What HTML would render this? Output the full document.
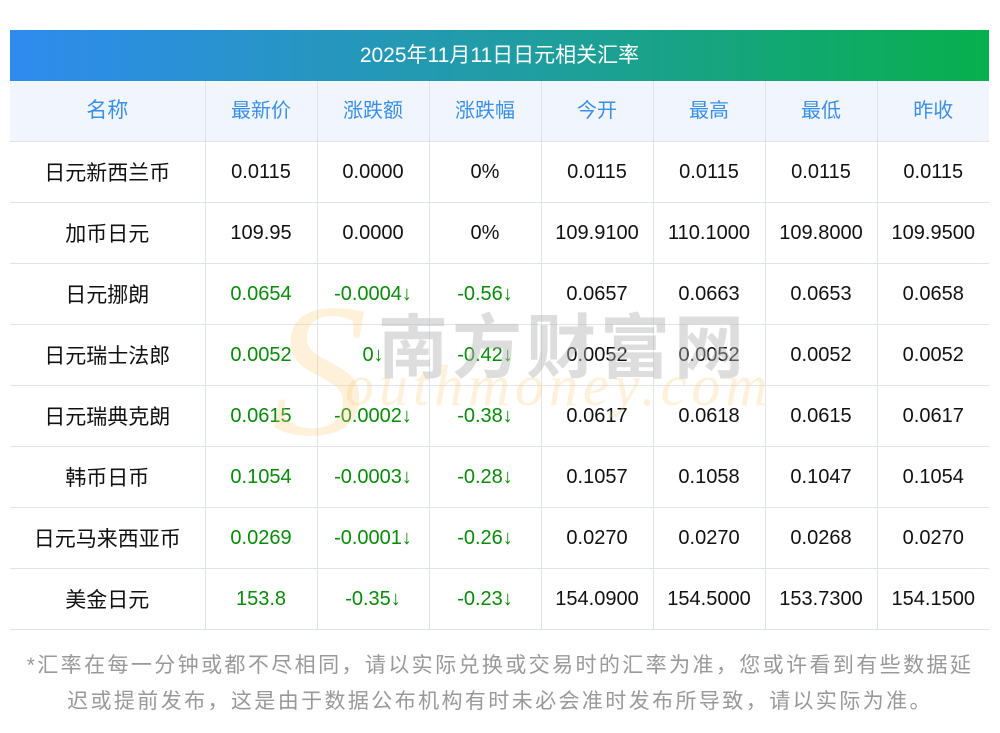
<!DOCTYPE html>
<html><head><meta charset="utf-8"><style>
body{margin:0;width:1000px;height:733px;background:#fff;font-family:"Liberation Sans","Noto Sans CJK SC",sans-serif;position:relative;overflow:hidden}
.title{position:absolute;left:10px;top:30px;width:979px;height:51px;background:linear-gradient(90deg,#2f8bef,#1f9e9e 55%,#07b04c);color:#fff;font-size:21px;line-height:51px;text-align:center}
table{position:absolute;left:10px;top:81px;border-collapse:collapse;width:979px;table-layout:fixed}
td{border:1px solid #dfe3ec;height:60px;text-align:center;font-size:20px;color:#111;padding:0;line-height:20px}
td span{position:relative;top:2px}
tr:first-child td span{top:0}
tr:first-child td{background:#f1f6fe;color:#3a8fe8}
td:first-child{border-left:none;font-size:21px}td:last-child{border-right:none}
tr:first-child td{border-top:none}
.g{color:#0a8a0a}
.note{position:absolute;left:-10px;top:648px;width:1020px;font-size:21px;color:#999;line-height:36px;text-align:center;letter-spacing:2.4px}
.wm1{position:absolute;left:378px;top:292px;font-size:70px;color:rgba(180,180,180,.45);letter-spacing:4px;font-family:"Noto Sans CJK SC",sans-serif;font-weight:bold;z-index:2}
.wm2{position:absolute;left:345px;top:352px;font-size:58px;color:rgba(252,200,120,.28);font-style:italic;font-family:"Liberation Serif",serif;letter-spacing:5px;z-index:2}
.wmS{position:absolute;left:272px;top:262px;font-size:190px;color:rgba(252,200,120,.28);font-style:italic;font-family:"Liberation Serif",serif;z-index:2}
</style></head><body>
<div class="title">2025年11月11日日元相关汇率</div>
<table>
<colgroup><col style="width:195px"><col style="width:112px"><col style="width:112px"><col style="width:112px"><col style="width:112px"><col style="width:112px"><col style="width:112px"><col style="width:112px"></colgroup>
<tr><td><span>名称</span></td><td><span>最新价</span></td><td><span>涨跌额</span></td><td><span>涨跌幅</span></td><td><span>今开</span></td><td><span>最高</span></td><td><span>最低</span></td><td><span>昨收</span></td></tr>
<tr><td><span>日元新西兰币</span></td><td>0.0115</td><td>0.0000</td><td>0%</td><td>0.0115</td><td>0.0115</td><td>0.0115</td><td>0.0115</td></tr>
<tr><td><span>加币日元</span></td><td>109.95</td><td>0.0000</td><td>0%</td><td>109.9100</td><td>110.1000</td><td>109.8000</td><td>109.9500</td></tr>
<tr><td><span>日元挪朗</span></td><td class="g">0.0654</td><td class="g">-0.0004↓</td><td class="g">-0.56↓</td><td>0.0657</td><td>0.0663</td><td>0.0653</td><td>0.0658</td></tr>
<tr><td><span>日元瑞士法郎</span></td><td class="g">0.0052</td><td class="g">0↓</td><td class="g">-0.42↓</td><td>0.0052</td><td>0.0052</td><td>0.0052</td><td>0.0052</td></tr>
<tr><td><span>日元瑞典克朗</span></td><td class="g">0.0615</td><td class="g">-0.0002↓</td><td class="g">-0.38↓</td><td>0.0617</td><td>0.0618</td><td>0.0615</td><td>0.0617</td></tr>
<tr><td><span>韩币日币</span></td><td class="g">0.1054</td><td class="g">-0.0003↓</td><td class="g">-0.28↓</td><td>0.1057</td><td>0.1058</td><td>0.1047</td><td>0.1054</td></tr>
<tr><td><span>日元马来西亚币</span></td><td class="g">0.0269</td><td class="g">-0.0001↓</td><td class="g">-0.26↓</td><td>0.0270</td><td>0.0270</td><td>0.0268</td><td>0.0270</td></tr>
<tr><td><span>美金日元</span></td><td class="g">153.8</td><td class="g">-0.35↓</td><td class="g">-0.23↓</td><td>154.0900</td><td>154.5000</td><td>153.7300</td><td>154.1500</td></tr>
</table>
<div class="wmS">S</div>
<div class="wm1">南方财富网</div>
<div class="wm2">outhmoney.com</div>
<div class="note">*汇率在每一分钟或都不尽相同，请以实际兑换或交易时的汇率为准，您或许看到有些数据延<br>迟或提前发布，这是由于数据公布机构有时未必会准时发布所导致，请以实际为准。</div>
</body></html>
